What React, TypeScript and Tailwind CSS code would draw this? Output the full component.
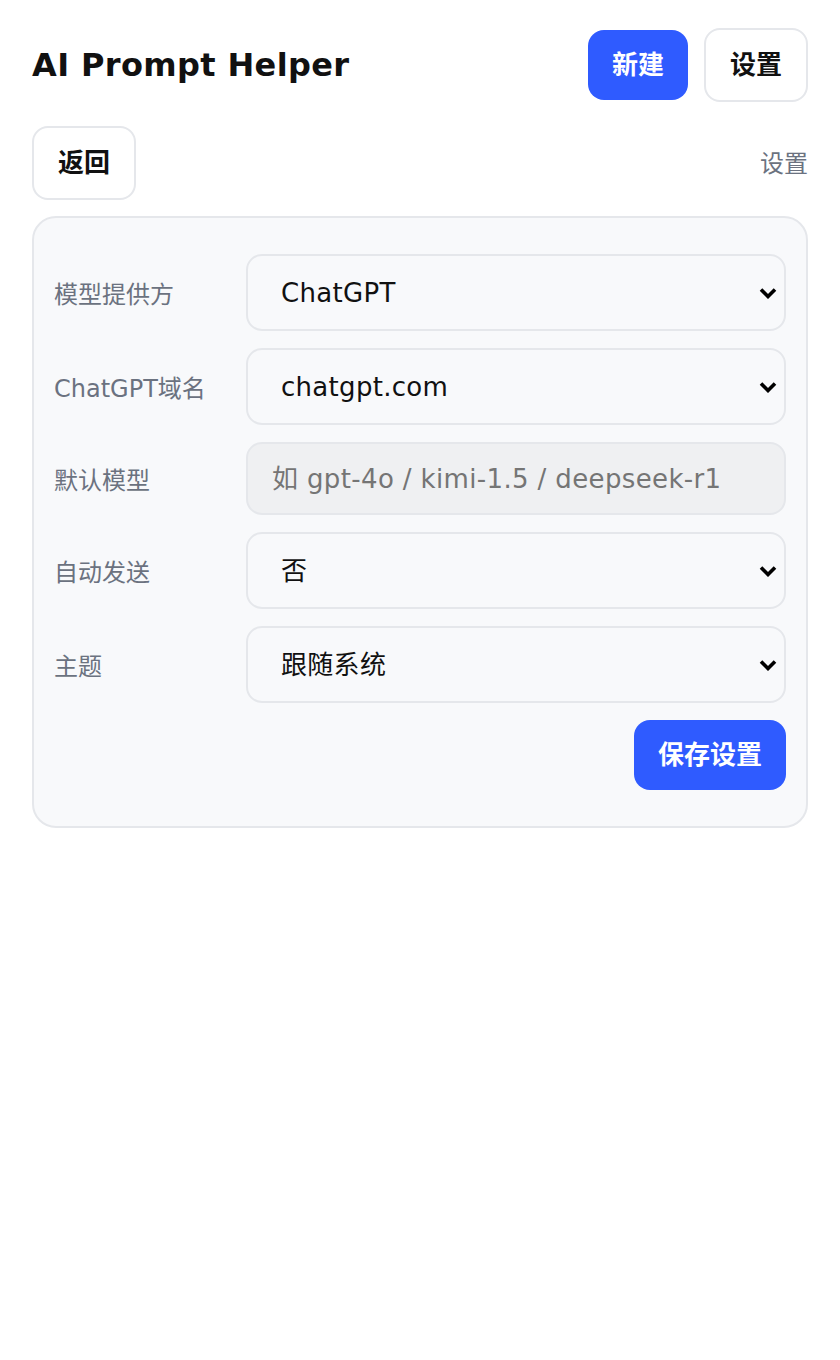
import { useState } from "react";

const font = { fontFamily: '"DejaVu Sans", "Noto Sans CJK SC", sans-serif' };

function Chevron() {
  return (
    <svg
      className="pointer-events-none absolute right-[9px] top-1/2 -translate-y-1/2"
      width="18"
      height="12"
      viewBox="0 0 18 12"
      fill="none"
    >
      <path d="M2 2.5 L9 9.5 L16 2.5" stroke="#000" strokeWidth="3.6" />
    </svg>
  );
}

function Select({
  value,
  onChange,
  options,
}: {
  value: string;
  onChange: (v: string) => void;
  options: { value: string; label: string }[];
}) {
  return (
    <div className="relative">
      <select
        className="w-full h-[77px] appearance-none rounded-[16px] border-2 border-[#e5e7eb] bg-[#f8f9fb] pl-[33px] pr-[40px] pt-[2px] text-[26px] tracking-[0.3px] text-[#111111] outline-none"
        value={value}
        onChange={(e) => onChange(e.target.value)}
      >
        {options.map((o) => (
          <option key={o.value} value={o.value}>
            {o.label}
          </option>
        ))}
      </select>
      <Chevron />
    </div>
  );
}

export default function App() {
  const [provider, setProvider] = useState("chatgpt");
  const [domain, setDomain] = useState("chatgpt.com");
  const [model, setModel] = useState("");
  const [autoSend, setAutoSend] = useState("no");
  const [theme, setTheme] = useState("system");

  return (
    <div className="min-h-screen bg-white px-[32px] pt-[28px]" style={font}>
      <div className="flex items-center justify-between">
        <h1 className="text-[32px] font-bold tracking-[0.37px] text-[#111111]">AI Prompt Helper</h1>
        <div className="flex items-center gap-[16px]">
          <button className="h-[70px] rounded-[16px] bg-[#2f5bff] px-[24px] text-[26px] font-bold text-white">
            新建
          </button>
          <button className="h-[74px] rounded-[16px] border-2 border-[#e5e7eb] bg-white px-[24px] text-[26px] font-bold text-[#111111]">
            设置
          </button>
        </div>
      </div>

      <div className="mt-[24px] flex items-center justify-between">
        <button className="h-[74px] rounded-[16px] border-2 border-[#e5e7eb] bg-white px-[24px] text-[26px] font-bold text-[#111111]">
          返回
        </button>
        <span className="pt-[2px] text-[24px] text-[#6b7280]">设置</span>
      </div>

      <div className="mt-[16px] rounded-[24px] border-2 border-[#e5e7eb] bg-[#f8f9fb] px-[20px] py-[36px]">
        <div className="flex flex-col gap-[17px]">
          <div className="grid grid-cols-[180px_1fr] items-center gap-[12px]">
            <label className="pt-[5px] text-[24px] text-[#6b7280]">模型提供方</label>
            <Select
              value={provider}
              onChange={setProvider}
              options={[
                { value: "chatgpt", label: "ChatGPT" },
                { value: "kimi", label: "Kimi" },
                { value: "deepseek", label: "DeepSeek" },
              ]}
            />
          </div>
          <div className="grid grid-cols-[180px_1fr] items-center gap-[12px]">
            <label className="pt-[5px] text-[24px] text-[#6b7280]">ChatGPT域名</label>
            <Select
              value={domain}
              onChange={setDomain}
              options={[
                { value: "chatgpt.com", label: "chatgpt.com" },
                { value: "chat.openai.com", label: "chat.openai.com" },
              ]}
            />
          </div>
          <div className="grid grid-cols-[180px_1fr] items-center gap-[12px]">
            <label className="pt-[5px] text-[24px] text-[#6b7280]">默认模型</label>
            <input
              className="h-[73px] w-full rounded-[16px] border-2 border-[#e5e7eb] bg-[#eff0f2] px-[24px] text-[26px] tracking-[0.36px] text-[#111111] outline-none placeholder:text-[#757575]"
              placeholder="如 gpt-4o / kimi-1.5 / deepseek-r1"
              value={model}
              onChange={(e) => setModel(e.target.value)}
            />
          </div>
          <div className="grid grid-cols-[180px_1fr] items-center gap-[12px]">
            <label className="pt-[5px] text-[24px] text-[#6b7280]">自动发送</label>
            <Select
              value={autoSend}
              onChange={setAutoSend}
              options={[
                { value: "no", label: "否" },
                { value: "yes", label: "是" },
              ]}
            />
          </div>
          <div className="grid grid-cols-[180px_1fr] items-center gap-[12px]">
            <label className="pt-[5px] text-[24px] text-[#6b7280]">主题</label>
            <Select
              value={theme}
              onChange={setTheme}
              options={[
                { value: "system", label: "跟随系统" },
                { value: "light", label: "浅色" },
                { value: "dark", label: "深色" },
              ]}
            />
          </div>
          <div className="flex justify-end">
            <button className="h-[70px] rounded-[16px] bg-[#2f5bff] px-[24px] text-[26px] font-bold text-white">
              保存设置
            </button>
          </div>
        </div>
      </div>
    </div>
  );
}
